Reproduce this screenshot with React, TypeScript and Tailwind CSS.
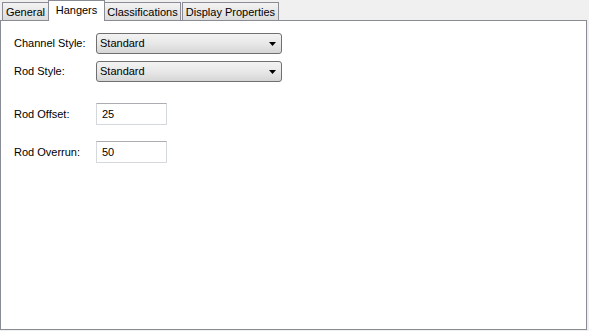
import React from "react";

const font = { fontFamily: '"Liberation Sans", Arial, sans-serif' };

function Tab({ label, w, selected }: { label: string; w: string; selected?: boolean }) {
  if (selected) {
    return (
      <div
        className={`relative z-10 -mb-px flex h-[21px] ${w} justify-center whitespace-nowrap border border-b-0 border-[#898c95] bg-white pt-[3px] text-[11px] leading-[13px] text-black`}
      >
        {label}
      </div>
    );
  }
  return (
    <div
      className={`flex h-[18px] ${w} justify-center whitespace-nowrap border border-b-0 border-[#898c95] bg-gradient-to-b from-[#f3f3f3] to-[#dcdcdc] pt-[3px] text-[11px] leading-[13px] text-black`}
    >
      {label}
    </div>
  );
}

function Combo({ value }: { value: string }) {
  return (
    <div className="relative flex h-[21px] w-[186px] items-center whitespace-nowrap rounded-[3px] border border-[#707070] bg-gradient-to-b from-[#f3f3f3] via-[#e8e8e8] to-[#d6d6d6] pl-[3px] text-[11px] text-black">
      <span>{value}</span>
      <svg className="absolute right-[5px] top-[8px]" width="7" height="4" viewBox="0 0 7 4">
        <path d="M0 0 H7 L3.5 4 Z" fill="#000" />
      </svg>
    </div>
  );
}

function TextBox({ value }: { value: string }) {
  return (
    <div className="flex h-[22px] w-[71px] items-center border border-[#d5d8dd] border-t-[#abadb3] bg-white pl-[5px] text-[11px] text-black">
      {value}
    </div>
  );
}

function Label({ children }: { children: React.ReactNode }) {
  return <div className="w-[82px] whitespace-nowrap text-[11px] text-black">{children}</div>;
}

export default function App() {
  return (
    <div className="h-[331px] w-[589px] bg-[#f0f0f0]" style={font}>
      <div className="flex h-[20px] items-end pl-[2px]">
        <Tab label="General" w="w-[47px]" />
        <div className="-ml-px">
          <Tab label="Hangers" w="w-[57px]" selected />
        </div>
        <div className="-ml-px">
          <Tab label="Classifications" w="w-[77px]" />
        </div>
        <div className="ml-px">
          <Tab label="Display Properties" w="w-[97px]" />
        </div>
      </div>
      <div className="h-[310px] w-[587px] border border-[#898c95] bg-white pl-[13px] pt-[12px]">
        <div className="flex flex-col">
          <div className="flex h-[21px] items-center">
            <Label>Channel Style:</Label>
            <Combo value="Standard" />
          </div>
          <div className="mt-[7px] flex h-[21px] items-center">
            <Label>Rod Style:</Label>
            <Combo value="Standard" />
          </div>
          <div className="mt-[21px] flex h-[22px] items-center">
            <Label>Rod Offset:</Label>
            <TextBox value="25" />
          </div>
          <div className="mt-[16px] flex h-[22px] items-center">
            <Label>Rod Overrun:</Label>
            <TextBox value="50" />
          </div>
        </div>
      </div>
    </div>
  );
}
